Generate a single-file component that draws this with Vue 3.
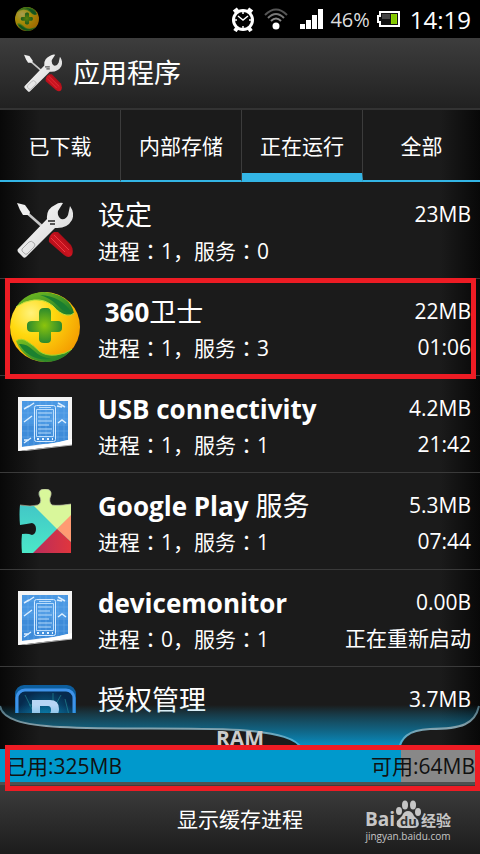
<template>
  <div class="screen">
    <svg class="defs" width="0" height="0" aria-hidden="true">
      <defs>
        <linearGradient id="metal" x1="0" y1="0" x2="1" y2="1">
          <stop offset="0" stop-color="#fff" />
          <stop offset="1" stop-color="#cfcfcf" />
        </linearGradient>
        <linearGradient id="handle" x1="0" y1="1" x2="1" y2="0">
          <stop offset="0" stop-color="#8d0710" />
          <stop offset="0.5" stop-color="#cc1420" />
          <stop offset="1" stop-color="#7a050c" />
        </linearGradient>
        <radialGradient id="ball" cx="0.3" cy="0.3" r="0.8">
          <stop offset="0" stop-color="#fff27a" />
          <stop offset="0.4" stop-color="#ffd90f" />
          <stop offset="1" stop-color="#f39a00" />
        </radialGradient>
        <linearGradient id="leaf" x1="0" y1="0" x2="1" y2="1">
          <stop offset="0" stop-color="#7cc01f" />
          <stop offset="1" stop-color="#15772c" />
        </linearGradient>
        <radialGradient id="cross">
          <stop offset="0" stop-color="#8cc40c" />
          <stop offset="1" stop-color="#2c8a2c" />
        </radialGradient>
        <linearGradient id="teal" x1="0" y1="0" x2="0" y2="1">
          <stop offset="0" stop-color="#3fbcc6" />
          <stop offset="1" stop-color="#4be8c8" />
        </linearGradient>
        <linearGradient id="ruby" x1="0" y1="0" x2="1" y2="0">
          <stop offset="0" stop-color="#b82c5c" />
          <stop offset="1" stop-color="#e0363d" />
        </linearGradient>
        <linearGradient id="glow" x1="0" y1="0" x2="0" y2="1">
          <stop offset="0" stop-color="#0d9bd0" stop-opacity="0" />
          <stop offset="0.45" stop-color="#0d86b4" stop-opacity="0.55" />
          <stop offset="1" stop-color="#0599d2" />
        </linearGradient>
        <linearGradient id="rim" x1="0" y1="0" x2="0" y2="1">
          <stop offset="0" stop-color="#4a6e7c" />
          <stop offset="0.5" stop-color="#86a2ac" />
          <stop offset="1" stop-color="#2fb4e6" />
        </linearGradient>
        <radialGradient id="deep">
          <stop offset="0" stop-color="#0a7ba6" />
          <stop offset="1" stop-color="#062a4d" />
        </radialGradient>

        <symbol id="tools" viewBox="0 0 56 56">
          <path d="M9 10L26 25" fill="none" stroke="#c8c8c8" stroke-width="2.500" />
          <path d="M0 1L8 3L13 10L12 13L6 13L3 8Z" fill="#eee" />
          <path d="M37 30L41 30L54 43Q57 48 55 53Q52 57 47 53L32 40Q31 34 37 30Z" fill="url(#handle)" />
          <path d="M37 33L52 48M34 36L48 50" fill="none" stroke="#ee3a42" />
          <path d="M1 47L30 17Q29 7 38 3Q42 0 46 1L41 9Q40 14 44 17Q49 18 51 13L53 4Q58 11 55 18Q50 27 38 26L9 55Q7 57 5 54L1 50Q0 48 1 47Z" fill="url(#metal)" />
          <path d="M5 47L12 40Q14 38 17 41Q19 43 17 45L10 52Q9 53 7 51L5 49Z" fill="none" stroke="#aaa" />
          <path d="M31 19H38M33 22H38" fill="none" stroke="#555" stroke-width="2" />
        </symbol>
        <symbol id="guard" viewBox="0 0 70 70">
          <circle cx="35" cy="35" r="35" fill="url(#ball)" />
          <path d="M6 15Q16 0 35 0Q60 3 64 21Q62 24 56 23Q50 22 43 14Q35 7 24 8Q14 9 6 15Z" fill="url(#leaf)" />
          <path d="M30 3Q51 4 62 21Q54 21 47 13Q40 6 30 3Z" fill="#1a7d30" />
          <path d="M6 15Q14 9 24 8Q35 7 43 14Q50 22 56 23Q62 24 64 21" fill="none" stroke="#c3e03a" stroke-width="1" />
          <path d="M6 49Q11 45 18 50Q23 53 29 59Q35 64 46 63Q56 62 62 57Q52 70 35 70Q14 69 6 49Z" fill="url(#leaf)" />
          <path d="M9 52Q16 51 23 58Q31 66 42 67Q20 70 9 52Z" fill="#1b812f" />
          <path d="M6 49Q11 45 18 50Q23 53 29 59Q35 64 46 63Q56 62 62 57" fill="none" stroke="#a4d62a" stroke-width="1" />
          <path d="M29 21Q29 16 34 16H37Q41 16 41 21V29H48Q52 29 52 33V36Q52 40 48 40H41V47Q41 51 37 51H34Q29 51 29 47V40H22Q17 40 17 36V33Q17 29 22 29H29Z" fill="url(#cross)" />
        </symbol>
        <symbol id="blueprint" viewBox="0 0 54 54">
          <path d="M0 0H54V48L34 49L0 54Z" fill="#f4f4f4" />
          <path d="M4 4H50V43Q36 47 25 47L4 50Z" fill="#3d8bd9" />
          <path d="M4 4H50V27H4Z" fill="#4a98e3" />
          <path d="M10 4V49M16 4V48M22 4V47M28 4V47M34 4V46M40 4V46M46 4V44M4 10H50M4 16H50M4 22H50M4 28H50M4 34H50M4 40H50" fill="none" stroke="#6eafe9" stroke-width="0.5" />
          <rect x="16.500" y="8.500" width="21" height="36" rx="2" fill="none" stroke="#d5eaff" />
          <path d="M18.500 12.500H35.500V39.500H18.500ZM21 10.500H33M20 16H34M20 20H32M20 24H34M20 28H31M20 32H34M20 36H33" fill="none" stroke="#b9dcfb" />
          <path d="M19 42H35" fill="none" stroke="#eaf5ff" stroke-width="2" stroke-dasharray="2 3" />
          <path d="M6 12L11 9M10 10L16 6M6 25L14 19M6 46L13 41M6 43L11 43M40 6L47 10M39 9L44 10M40 26L44 23L48 26" fill="none" stroke="#dbeeff" stroke-width="1.500" />
          <path d="M0 54L3 50Q26 49 54 42V48L34 50Z" fill="#fff" />
          <path d="M4 54L54 48" fill="none" stroke="#aaa" />
        </symbol>
        <symbol id="puzzle" viewBox="0 0 52 64">
          <path d="M1 16Q12 18 19 16Q24 13 20 6Q19 0 26 0Q33 0 32 6Q29 13 33 16Q39 17 52 15V64H3Q2 54 3 45Q9 44 13 46Q17 45 17 40Q17 35 13 34Q8 35 1 36Q0 25 1 16Z" fill="url(#teal)" />
          <path d="M15 17Q24 16 21 8Q18 0 26 0Q33 0 32 6Q29 13 33 16Q39 17 52 15V27L38 40Z" fill="#d9f79b" />
          <path d="M52 26V53L38 40Z" fill="#ff9b72" />
          <path d="M38 40L52 53V64H14Z" fill="url(#ruby)" />
          <path d="M1 16Q12 18 19 16Q24 13 20 6Q19 0 26 0Q33 0 32 6Q29 13 33 16Q39 17 52 15" fill="none" stroke="#b5aa8f" stroke-opacity="0.7" />
        </symbol>
        <symbol id="permission" viewBox="0 0 61 61">
          <rect width="61" height="61" rx="9" fill="#0d5e9e" />
          <rect x="2" y="5" width="57" height="56" rx="8" fill="url(#deep)" stroke="#3f93ea" stroke-width="3" />
          <path d="M10 10L20 30M14 20H28M38 8V16M46 10L36 28M50 14L54 30" fill="none" stroke="#27929a" stroke-opacity="0.6" />
          <path d="M17 15H35Q44 15 44 24Q44 31 37 35H25V50H17ZM25 21V29H33Q36 29 36 25Q36 21 33 21Z" fill="#b8d6f5" fill-rule="evenodd" />
        </symbol>
      </defs>
    </svg>

    <div class="status">
      <svg class="status-app"><use href="#guard" /></svg>
      <svg width="24" height="25" viewBox="0 0 24 25" fill="none" stroke="#fff">
        <circle cx="12" cy="13" r="9.500" stroke-width="3" />
        <path d="M3 5L7 2M17 2L21 5M6 21L4 24M18 21L20 24" stroke-width="4" />
        <path d="M7 9L12 13L17 9M12 5V7M12 19V21M4 13H6M18 13H20" stroke-width="1.500" />
      </svg>
      <svg class="wifi" width="24" height="22" viewBox="0 0 24 22" fill="none" stroke="#555" stroke-width="2">
        <path d="M1 7Q12 -4 23 7" />
        <path d="M4 10Q12 2 20 10" stroke="#777" />
        <path d="M7 13Q12 8 17 13" stroke="#888" />
        <circle cx="12" cy="18" r="3.500" fill="#fff" stroke="none" />
      </svg>
      <svg class="signal" width="23" height="20" viewBox="0 0 23 20" fill="#fff">
        <path d="M0 15H5V20H0ZM6 11H11V20H6ZM12 6H17V20H12ZM18 0H23V20H18Z" />
      </svg>
      <span class="percent">46%</span>
      <svg class="battery" width="23" height="16" viewBox="0 0 23 16">
        <path d="M3 1H22V15H3V11H1V5H3Z" fill="#111" stroke="#fff" stroke-width="2" />
        <path d="M5 3H13V8H5Z" fill="#444" />
        <path d="M14 3H20V13H14Z" fill="#8fd400" />
        <path d="M16 3V13M18 3V13" stroke="#5f9c00" stroke-width="0.5" />
      </svg>
      <time class="clock">14:19</time>
    </div>

    <header class="header">
      <svg class="header-icon"><use href="#tools" /></svg>
      <h1>应用程序</h1>
    </header>

    <nav class="tabs">
      <button
        v-for="tab in tabs"
        :key="tab"
        class="tab"
        :class="{ 'tab--active': tab === activeTab }"
        @click="activeTab = tab"
      >
        {{ tab }}
      </button>
    </nav>

    <ul class="list">
      <li v-for="app in apps" :key="app.id" class="row" :class="{ 'row--marked': app.marked }">
        <div class="row-icon">
          <svg :class="'icon-' + app.icon"><use :href="'#' + app.icon" /></svg>
        </div>
        <div class="row-text">
          <div class="row-line row-title">
            <span><b>{{ app.latin }}</b>{{ app.name }}</span>
            <span class="row-value">{{ app.size }}</span>
          </div>
          <div v-if="app.services !== undefined" class="row-line row-sub">
            <span>进程：{{ app.processes }}<span class="comma">，</span>服务：{{ app.services }}</span>
            <span class="row-value">{{ app.time }}</span>
          </div>
        </div>
      </li>
    </ul>

    <section class="ram">
      <svg class="ram-curve" viewBox="0 0 480 44" preserveAspectRatio="none">
        <path d="M0 0C2 14 22 20 60 22C120 25 180 22 240 25C280 28 297 34 302 44H399C401 34 407 25 430 24C462 24 475 19 479 0Z" fill="url(#glow)" />
        <path d="M0 1C2 14 22 20 60 22C120 25 180 22 240 25C280 28 297 34 302 44M399 44C401 34 407 25 430 24C462 24 475 19 479 1" fill="none" stroke="url(#rim)" stroke-width="2" />
      </svg>
      <h2 class="ram-title">RAM</h2>
      <div class="ram-bar">
        <div class="ram-used" :style="{ width: usedPercent + '%' }"></div>
        <span>已用:{{ used }}MB</span>
        <span>可用:{{ free }}MB</span>
      </div>
    </section>

    <footer class="footer">
      <button class="cached">显示缓存进程</button>
      <div class="watermark">
        <div class="watermark-logo">
          <span class="bai">Bai</span>
          <svg width="26" height="29" viewBox="0 0 26 29" fill="#c6c6c6">
            <ellipse cx="4" cy="11" rx="3" ry="4" />
            <ellipse cx="10" cy="5" rx="3" ry="4.500" />
            <ellipse cx="18" cy="5" rx="3" ry="4.500" />
            <ellipse cx="23" cy="12" rx="3" ry="4" />
            <path d="M13 11Q17 11 19 16L23 20Q26 28 18 28H7Q0 28 2 21L7 16Q9 11 13 11Z" />
            <text x="5" y="26" class="du">du</text>
          </svg>
          <span class="jingyan">经验</span>
        </div>
        <div class="watermark-url">jingyan.baidu.com</div>
      </div>
    </footer>
  </div>
</template>

<script setup>
import { computed, ref } from 'vue'

const tabs = ['已下载', '内部存储', '正在运行', '全部']
const activeTab = ref('正在运行')

const apps = [
  { id: 1, icon: 'tools', latin: '', name: '设定', size: '23MB', processes: 1, services: 0, time: '' },
  { id: 2, icon: 'guard', latin: '\u00a0360', name: '卫士', size: '22MB', processes: 1, services: 3, time: '01:06', marked: true },
  { id: 3, icon: 'blueprint', latin: 'USB connectivity', name: '', size: '4.2MB', processes: 1, services: 1, time: '21:42' },
  { id: 4, icon: 'puzzle', latin: 'Google Play', name: ' 服务', size: '5.3MB', processes: 1, services: 1, time: '07:44' },
  { id: 5, icon: 'blueprint', latin: 'devicemonitor', name: '', size: '0.00B', processes: 0, services: 1, time: '正在重新启动' },
  { id: 6, icon: 'permission', latin: '', name: '授权管理', size: '3.7MB' },
]

const used = ref(325)
const free = ref(64)
const usedPercent = computed(() => (used.value / (used.value + free.value)) * 100)
</script>

<style>
body {
  margin: 0;
  background: #000;
}
</style>

<style scoped>
.screen {
  height: 100vh;
  display: flex;
  flex-direction: column;
  overflow: hidden;
  color: #fff;
  font-family: "Open Sans", "Noto Sans CJK SC", sans-serif;
  font-size: 21px;
  background: linear-gradient(90deg, #080808, #1b1b1b 40px, #1b1b1b calc(100% - 40px), #080808);
}

.defs {
  position: absolute;
}

button {
  padding: 0;
  border: none;
  background: none;
  color: inherit;
  font: inherit;
  cursor: pointer;
}

.status {
  flex: none;
  height: 38px;
  padding: 0 9px 0 15px;
  display: flex;
  align-items: center;
  background: #000;
}

.status-app {
  width: 24px;
  height: 24px;
  margin-right: auto;
  opacity: 0.65;
}

.wifi {
  margin-left: 9px;
}

.signal {
  margin-left: 12px;
}

.percent {
  margin-left: 7px;
  font-size: 20px;
  color: #ddd;
}

.battery {
  margin-left: 7px;
}

.clock {
  margin-left: 10px;
  font-size: 24px;
}

.header {
  flex: none;
  height: 70px;
  padding-left: 24px;
  display: flex;
  align-items: center;
  gap: 11px;
  background: linear-gradient(#3d3d3d, #212121);
  border-bottom: 2px solid #333;
}

.header-icon {
  width: 38px;
  height: 38px;
}

.header h1 {
  margin: 0;
  font-size: 27px;
  line-height: 36px;
  font-weight: 400;
}

.tabs {
  flex: none;
  display: grid;
  grid-template-columns: repeat(3, 121fr) 117fr;
}

.tab {
  height: 72px;
  border-bottom: 2px solid #33b5e5;
  border-right: 1px solid #3c3c3c;
  font-size: 21px;
}

.tab:last-child {
  border-right: none;
}

.tab--active {
  padding-top: 7px;
  border-bottom-width: 9px;
}

.list {
  flex: 1;
  min-height: 0;
  margin: 0;
  padding: 0;
  list-style: none;
  overflow: hidden;
}

.row {
  position: relative;
  display: flex;
  height: 96px;
  border-bottom: 1px solid #3a3a3a;
}

.row--marked::after {
  content: "";
  position: absolute;
  inset: -1px 4px -4px 5px;
  z-index: 1;
  border: 5px solid #ee1c24;
}

.row-icon {
  width: 90px;
  display: flex;
  align-items: center;
  justify-content: center;
}

.icon-tools {
  width: 56px;
  height: 56px;
}

.icon-guard {
  width: 70px;
  height: 70px;
}

.icon-blueprint {
  width: 54px;
  height: 54px;
}

.icon-puzzle {
  width: 52px;
  height: 64px;
}

.icon-permission {
  width: 61px;
  height: 61px;
}

.row-text {
  flex: 1;
  padding: 15px 9px 0 8px;
}

.row-line {
  display: flex;
  justify-content: space-between;
  line-height: 35px;
  white-space: pre;
}

.row-title {
  font-size: 27px;
}

.row-title b {
  font-size: 26px;
}

.row-sub {
  font-family: "Open Sans", "Noto Sans CJK TC", sans-serif;
  font-size: 21px;
}

.comma {
  font-family: "Noto Sans CJK SC", sans-serif;
}

.row-value {
  font-size: 21px;
}

.ram {
  flex: none;
  position: relative;
  z-index: 1;
}

.ram-curve {
  position: absolute;
  top: -8px;
  left: 0;
  width: 100%;
  height: 44px;
}

.ram-title {
  position: relative;
  margin: 0;
  padding-top: 12px;
  height: 24px;
  text-align: center;
  font-size: 21px;
  line-height: 26px;
  color: #ccc;
}

.ram-bar {
  position: relative;
  display: flex;
  justify-content: space-between;
  height: 33px;
  padding: 0 5px 0 6px;
  line-height: 34px;
  font-size: 21px;
  color: #111;
  background: #888;
  border-bottom: 3px solid #505050;
}

.ram-bar::after {
  content: "";
  position: absolute;
  inset: -4px 0 -9px 5px;
  border: 5px solid #ee1c24;
}

.ram-bar span {
  position: relative;
}

.ram-used {
  position: absolute;
  top: 0;
  bottom: 0;
  left: 0;
  background: #0099cc;
}

.footer {
  flex: none;
  position: relative;
  height: 69px;
  text-align: center;
  background: linear-gradient(#3d3d3d, #1c1c1c);
}

.cached {
  height: 65px;
}

.watermark {
  position: absolute;
  right: 29px;
  bottom: 10px;
  color: #c6c6c6;
}

.watermark-logo {
  display: flex;
  align-items: flex-end;
  height: 29px;
}

.bai {
  font-size: 19px;
  line-height: 20px;
  font-weight: 700;
}

.du {
  font-size: 13px;
  font-weight: 700;
  fill: #333;
}

.jingyan {
  font-size: 15px;
  line-height: 18px;
  font-weight: 700;
}

.watermark-url {
  font-size: 10px;
  line-height: 15px;
}
</style>
